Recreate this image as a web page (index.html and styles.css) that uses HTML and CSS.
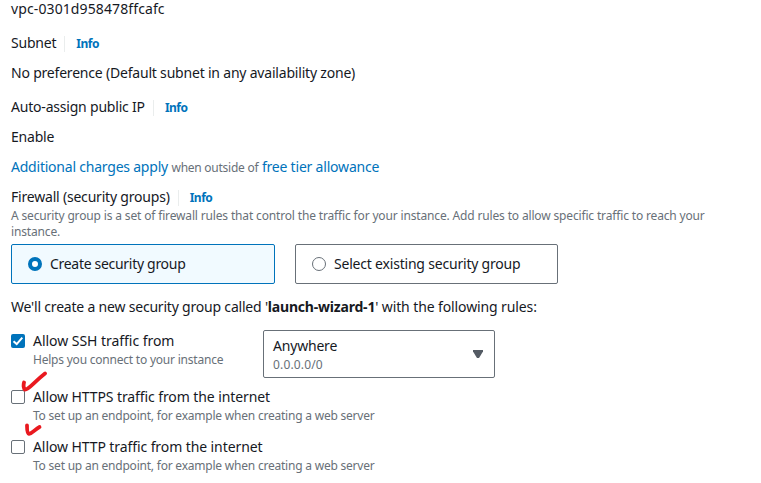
FILE: index.html
```html
<!DOCTYPE html>
<html lang="en">
<head>
<meta charset="utf-8">
<title>Network settings</title>
<link rel="stylesheet" href="styles.css">
</head>
<body>
<main class="panel">
  <p class="value"><span class="t vpc">vpc-0301d958478ffcafc</span></p>
  <div class="label"><span class="t">Subnet</span><a class="info">Info</a></div>
  <p class="value"><span class="t">No preference (Default subnet in any availability zone)</span></p>
  <div class="label"><span class="t">Auto-assign public IP</span><a class="info">Info</a></div>
  <p class="value"><span class="t">Enable</span></p>
  <p class="value charges"><a class="t add">Additional charges apply</a><span class="t when">when outside of</span><a class="t free">free tier allowance</a></p>
  <div class="label firewall"><span class="t">Firewall (security groups)</span><a class="info">Info</a></div>
  <p class="description">A security group is a set of firewall rules that control the traffic for your instance. Add rules to allow specific traffic to reach your instance.</p>
  <div class="tiles">
    <label class="tile selected"><span class="radio"></span><span class="t create">Create security group</span></label>
    <label class="tile"><span class="radio"></span><span class="t">Select existing security group</span></label>
  </div>
  <p class="notice"><span class="t">We'll create a new security group called '</span><b class="t">launch-wizard-1</b><span class="t with">' with the following rules:</span></p>
  <div class="rules">
    <div class="rule ssh">
      <span class="box checked"><svg viewBox="0 0 14 14"><path d="M2.5 7.2 5.7 10.1 11.3 3.7"/></svg></span>
      <div class="rule-text"><span class="t allow-ssh">Allow SSH traffic from</span><small class="t">Helps you connect to your instance</small></div>
      <div class="dropdown"><div class="option"><span class="t">Anywhere</span><small class="t cidr">0.0.0.0/0</small></div><svg class="caret" viewBox="0 0 10 8"><path d="M0 0h10v1.500L6 8H4L0 1.500z"/></svg></div>
    </div>
    <div class="rule">
      <span class="box"><svg class="mark large" viewBox="0 0 28 24"><path d="M3 11.500C2.300 14 2.500 18 4 18.700C8 18.500 13 11 24 2.500"/></svg></span>
      <div class="rule-text"><span class="t web">Allow HTTPS traffic from the internet</span><small class="t">To set up an endpoint, for example when creating a web server</small></div>
    </div>
    <div class="rule">
      <span class="box"><svg class="mark small" viewBox="0 0 20 16"><path d="M3 2.500C3 6 3 10.500 5 10.900C8.500 10.500 10.500 6.500 15.500 4"/></svg></span>
      <div class="rule-text"><span class="t web">Allow HTTP traffic from the internet</span><small class="t">To set up an endpoint, for example when creating a web server</small></div>
    </div>
  </div>
</main>
</body>
</html>
```
FILE: styles.css
```css
* { box-sizing: border-box; }
body {
  margin: 0;
  height: 483px;
  overflow: hidden;
  background: #fff;
  color: #16191f;
  font: 14px/22px "Noto Sans", sans-serif;
}
p { margin: 0; }
a { color: #0073bb; }
.t { white-space: nowrap; letter-spacing: -0.2px; }
.vpc { letter-spacing: 0.11px; }
.add { letter-spacing: -0.22px; }
.create { letter-spacing: -0.3px; }
.with { letter-spacing: -0.11px; }
.allow-ssh { letter-spacing: -0.04px; }
.web { letter-spacing: -0.09px; }
.panel { width: 705px; margin: -2px 0 0 11px; }
.label { display: flex; align-items: center; margin-top: 12px; height: 22px; }
.value + .value, .label + .value { margin-top: 8px; }
.label.firewall { margin-top: 8px; }
.info {
  display: flex;
  align-items: center;
  height: 16px;
  margin: 2px 0 0 8px;
  padding-left: 11px;
  border-left: 1px solid #eaeded;
  font-size: 12px;
  font-weight: 700;
  letter-spacing: -0.5px;
}
.charges { display: flex; align-items: baseline; gap: 3.5px; height: 22px; }
.when { color: #687078; font-size: 12px; letter-spacing: -0.25px; }
.description {
  color: #687078;
  font-size: 12px;
  line-height: 16px;
  letter-spacing: -0.155px;
}
.tiles { display: flex; gap: 20px; margin-top: 4px; }
.tile {
  display: flex;
  align-items: center;
  gap: 8px;
  width: 263px;
  height: 40px;
  padding-left: 16px;
  border: 1px solid #687078;
  border-radius: 2px;
}
.tile.selected { width: 264px; border-color: #0073bb; background: #f1faff; }
.radio { width: 14px; height: 14px; border: 1px solid #687078; border-radius: 50%; background: #fff; }
.selected .radio { border: 4px solid #0073bb; }
.notice { margin-top: 12px; }
.rules { margin-top: 12px; }
.rule { display: flex; height: 50px; }
.ssh { height: 56px; }
.box {
  position: relative;
  width: 14px;
  height: 14px;
  margin: 4px 8px 0 0;
  border: 1px solid #687078;
  border-radius: 2px;
}
.checked { border: 0; background: #0073bb; }
.box svg { display: block; fill: none; stroke: #fff; stroke-width: 2; }
.box .mark {
  position: absolute;
  stroke: #e9191f;
  stroke-width: 3.8;
  stroke-linecap: round;
  stroke-linejoin: round;
}
.large { left: 9px; top: -20px; width: 28px; height: 24px; }
.small { left: 12px; top: -18px; width: 20px; height: 16px; }
.rule-text, .option { display: flex; flex-direction: column; align-items: flex-start; }
.ssh .rule-text { width: 190px; }
small { color: #687078; font-size: 12px; line-height: 16px; }
small.t { letter-spacing: -0.217px; }
small.cidr { letter-spacing: 0.15px; }
.dropdown {
  display: flex;
  justify-content: space-between;
  align-items: center;
  width: 232px;
  height: 48px;
  margin-left: 40px;
  padding: 0 11px 0 9px;
  border: 1px solid #687078;
  border-radius: 2px;
}
.caret { width: 10px; height: 8px; fill: #545b64; }
```
